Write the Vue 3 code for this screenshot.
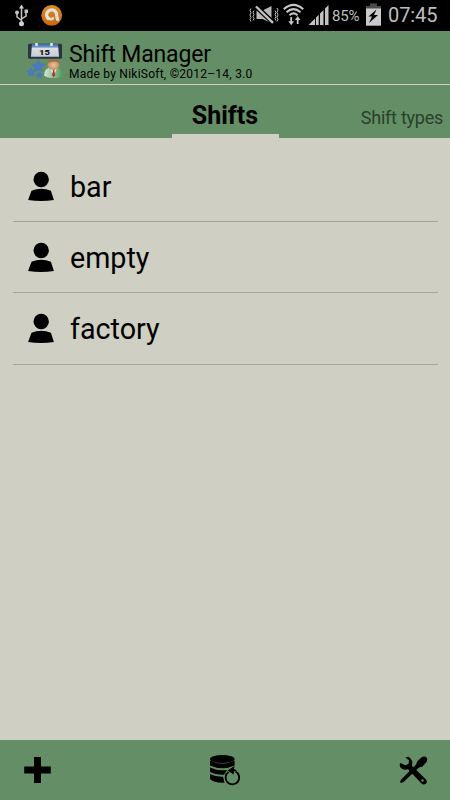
<template>
	<div class="screen">
		<div class="status-bar">
			<svg class="usb" viewBox="14 4 16 23" width="16" height="23">
				<path d="M21.500 7V23M21.500 20.500l-4.500-3.500V13M21.500 19l4.500-3V11.500" fill="none" stroke="#c4c4c4" stroke-width="1.500" />
				<path d="M21.500 4.500l2.500 4h-5z" fill="#d0d0d0" />
				<circle cx="21.500" cy="23.800" r="2.500" fill="#d0d0d0" />
				<circle cx="17" cy="12.500" r="2" fill="#c4c4c4" />
				<path d="M24.500 9.500h3.500v3.500h-3.500z" fill="#c4c4c4" />
			</svg>
			<svg class="avast" viewBox="41 4 22 22" width="22" height="22">
				<defs>
					<linearGradient id="orange" x1="0" y1="0" x2="0" y2="1">
						<stop offset="0" stop-color="#d98d28" />
						<stop offset="1" stop-color="#ca6710" />
					</linearGradient>
				</defs>
				<circle cx="51.700" cy="15.300" r="10.400" fill="url(#orange)" />
				<path d="M48.200 18.500a5 5 0 1 1 8.400-3.300q.2 2.300 1 4.300" fill="none" stroke="#e4e0d8" stroke-width="3.200" stroke-linecap="round" />
				<path d="M48.500 17.500q2 3 4.500.8" fill="none" stroke="#e4e0d8" stroke-width="2.500" stroke-linecap="round" />
			</svg>
			<svg class="signals" viewBox="249 0 81 30" width="81" height="30">
				<g fill="none" stroke="#b8b8b8" stroke-width="1">
					<path d="M251 8.500l-1 2 1 2-1 2.500 1 2.500-1 2 1 2M254 10.500l-1 2 1 2-1 2 1 2-1 2" />
					<path d="M275 10.500l1 2-1 2 1 2-1 2 1 2M277 8l1 2-1 2.500 1 2.500-1 2.500 1 2-1 2" />
				</g>
				<path d="M256.500 10.500h6l9-4.500v17l-9-4h-6z" fill="#b8b8b8" />
				<path d="M255.500 6l18 17" stroke="#000" stroke-width="4.800" />
				<path d="M256 6.500l17 16.300" stroke="#c4c4c4" stroke-width="2.400" />
				<g fill="none" stroke="#c6c6c6" stroke-width="2.100">
					<path d="M283.800 9.200q9.700-8.500 19.400 0M286.500 12.200q7-6.200 14 0M289.500 15.200q4-3.600 8 0" />
				</g>
				<path d="M291.200 17v6M297.700 24v-5" stroke="#c6c6c6" stroke-width="1.800" />
				<path d="M288.400 21.300h5.600l-2.800 4zM294.900 20h5.600l-2.800-4z" fill="#c6c6c6" />
				<path d="M308.500 25l6.500-6.500v6.500zM316 25v-7.500l2.700-2.700v10.200zM320 25V13.500l3.500-3.500v15zM325 25V8.500l3.500-3.500v20z" fill="#c2c2c2" />
			</svg>
			<span class="percent">85%</span>
			<svg class="battery" viewBox="365 3 17 24" width="17" height="24">
				<path d="M370 3.500h7V6h4v3h-15V6h4z" fill="#4c4c4c" />
				<path d="M366 8.500h15v17.200h-15z" fill="#cacaca" />
				<path d="M376.500 9.500l-8 7h3.500l-3 6.500 9-8h-4z" fill="#000" />
			</svg>
			<span class="clock">07:45</span>
		</div>

		<header class="app-header">
			<svg class="logo" viewBox="26 42 38 38" width="38" height="38">
				<defs>
					<linearGradient id="calendar" x1="0" y1="0" x2="0" y2="1">
						<stop offset="0" stop-color="#3565a8" />
						<stop offset=".25" stop-color="#7598c8" />
						<stop offset=".32" stop-color="#dde0e5" />
						<stop offset="1" stop-color="#c6cbd2" />
					</linearGradient>
					<radialGradient id="skin">
						<stop offset="0" stop-color="#ecc198" />
						<stop offset="1" stop-color="#c38d64" />
					</radialGradient>
					<linearGradient id="shirt">
						<stop offset="0" stop-color="#d5e8d2" />
						<stop offset="1" stop-color="#4c995b" />
					</linearGradient>
				</defs>
				<rect x="28" y="43.800" width="34" height="15" rx="1.500" fill="#2b3442" />
				<path d="M32 44h26l1 12.700H31z" fill="url(#calendar)" />
				<path d="M36.500 43v3M51.500 43v3" stroke="#dfe4ec" stroke-width="2.600" />
				<text class="day" x="39" y="54.500" textLength="11" lengthAdjust="spacingAndGlyphs">15</text>
				<g fill="#4a79bd">
					<path d="M38.500 59.500l2 4 5.500.500-4 3.500 1 4.500-4.500-2-4.500 2 .5-4.500-3.500-3.500 5-.5z" />
					<path d="M31 67l1.500 3 3.500.500-2.500 2.500.5 3.500-3-1.500-3 1.500.5-3.500-2.500-2.500 3.500-.5z" />
					<path d="M40 71.500l1 2 2.500.500-2 2 .5 3-2.500-1.500-2.500 1.500.5-3-2-2 3-.5z" />
				</g>
				<path d="M44 75.500q.5-7 5.500-7.800h8q5 1.300 5.500 8-3 2.300-9.500 2.300t-9.500-2.500z" fill="url(#shirt)" />
				<path d="M50 67.700l3.500 9 3.500-9z" fill="#f1e7dc" />
				<path d="M52.500 69h2.200l-.4 2 1 4-1.700 2.500-1.600-2.500 1-4z" fill="#b8322b" />
				<ellipse cx="53.500" cy="65" rx="5.800" ry="5" fill="url(#skin)" />
				<path d="M47.300 64q-.3-4.500 6.200-4.500 6.500.3 6.500 4.500-1.500-1.500-3-2-3-.7-6 0-2 .5-3.700 2z" fill="#a96f43" />
			</svg>
			<div class="titles">
				<h1>Shift Manager</h1>
				<p>Made by NikiSoft, ©2012–14, 3.0</p>
			</div>
		</header>

		<nav class="tabs">
			<div class="tab active"><span>Shifts</span></div>
			<div class="tab next"><span>Shift types</span></div>
		</nav>

		<ul class="shifts">
			<li v-for="shift in shifts" :key="shift">
				<svg class="person" viewBox="0 0 26 31" width="26" height="31">
					<circle cx="13.200" cy="8.500" r="7.700" />
					<path d="M3.500 19.800q9.700-4 19.400 0l3 9.200q-12.700 2.200-25.800 0z" />
				</svg>
				<span>{{ shift }}</span>
			</li>
		</ul>

		<footer class="toolbar">
			<svg viewBox="24 757 27 27" width="27" height="27">
				<path d="M34 757h7v9.500h9.800v7H41v9.500h-7v-9.500h-9.800v-7H34z" />
			</svg>
			<svg viewBox="209 754 32 32" width="32" height="32">
				<ellipse cx="222.300" cy="759" rx="12.300" ry="4" />
				<path d="M210 760.500q12.300 6 24.600 0v5q-12.300 5.500-24.600 0z" />
				<path d="M210 767.500q7 3.500 17 2.500l-3 4.700q-8 .5-14-2.700z" />
				<path d="M210 774q6 3 13 2.700l1.500 6q-10 .5-14.500-3.700z" />
				<path d="M235.500 771.500a6.800 6.800 0 1 1-7 .5" fill="none" stroke="#000" stroke-width="1.900" />
				<path d="M227.500 770.500l7-4.500-.5 3 3 1.500-3 1-.5 3z" />
			</svg>
			<svg viewBox="398 755 31 31" width="31" height="31">
				<path d="M409 757q-1.500-.5-3.500.5l3.500 3-.5 3.500-3 1.300-5.500-2.300q-1 3.500 1.500 5.500 2.500 1.800 6.500.8l13.500 14.200q2 2 4.300.3 2-2.300 0-4.500l-14-13.500q1-3 .2-4.800-1.200-2.500-3-4z" />
				<path d="M422 757q3-1 4.500.5 1.500 1.800 0 4.500l-4 4.500-3.500 1-15.500 14.500-2.500 1-1-1 1.200-2.500 14.800-15 1.500-3.500z" />
				<circle cx="422.500" cy="780.500" r="1.200" class="hole" />
			</svg>
		</footer>
	</div>
</template>

<script setup>
	const shifts = ["bar", "empty", "factory"];
</script>

<style>
	body {
		margin: 0;
	}
</style>

<style scoped>
	.screen {
		display: flex;
		flex-direction: column;
		width: 450px;
		height: 800px;
		overflow: hidden;
		background: #d0cfc3;
		color: #000;
		font-family: Roboto, "Liberation Sans", sans-serif;
	}
	svg {
		display: block;
		flex: none;
	}
	.status-bar {
		display: flex;
		align-items: flex-start;
		height: 31px;
		flex: none;
		background: #000;
		color: #bebebe;
		white-space: nowrap;
	}
	.usb {
		margin: 4px 0 0 14px;
	}
	.avast {
		margin: 4px 0 0 11px;
	}
	.signals {
		margin-left: 186px;
	}
	.percent {
		width: 33px;
		padding: 6px 0 0 2px;
		font-size: 15px;
		line-height: 20px;
		letter-spacing: -0.2px;
	}
	.battery {
		margin-top: 3px;
	}
	.clock {
		padding: 3px 0 0 6px;
		font-size: 20px;
		line-height: 25px;
		letter-spacing: -0.1px;
	}
	.app-header {
		display: flex;
		height: 53px;
		flex: none;
		background: #648e65;
		border-bottom: 1px solid #d0cfc3;
	}
	.logo {
		margin: 11px 0 0 26px;
	}
	.day {
		font-size: 7px;
		font-weight: 900;
		fill: #1c1d20;
	}
	.titles {
		padding: 11px 0 0 5px;
	}
	h1 {
		margin: 0;
		font-size: 23px;
		font-weight: 400;
		line-height: 25px;
		letter-spacing: -0.15px;
	}
	p {
		margin: 1px 0 0;
		font-size: 12px;
		line-height: 12px;
		letter-spacing: 0.24px;
	}
	.tabs {
		display: grid;
		grid-template-columns: 171.5px 107px 171.5px;
		height: 53px;
		flex: none;
		background: #648e65;
	}
	.tab {
		white-space: nowrap;
		box-sizing: border-box;
	}
	.active {
		grid-column: 2;
		padding-top: 14.5px;
		border-bottom: 4px solid #d0cfc3;
		font-size: 25px;
		font-weight: 700;
		line-height: 32px;
		text-align: center;
	}
	.next {
		padding: 21px 7px 0 0;
		font-size: 18px;
		line-height: 24px;
		letter-spacing: -0.25px;
		text-align: right;
		color: #2a402b;
	}
	.shifts {
		flex: 1;
		margin: 0;
		padding: 13px 12.5px 0;
		list-style: none;
	}
	li {
		display: flex;
		align-items: flex-start;
		box-sizing: border-box;
		height: 71.200px;
		border-bottom: 1px solid #a9a595;
		font-size: 28.700px;
		line-height: 36px;
	}
	.person {
		margin: 20px 0 0 15.500px;
	}
	li span {
		padding: 18px 0 0 16px;
	}
	.toolbar {
		display: flex;
		align-items: center;
		justify-content: space-between;
		box-sizing: border-box;
		height: 60px;
		flex: none;
		padding: 0 21px 0 24px;
		background: #648e65;
	}
	.hole {
		fill: #648e65;
	}
</style>
